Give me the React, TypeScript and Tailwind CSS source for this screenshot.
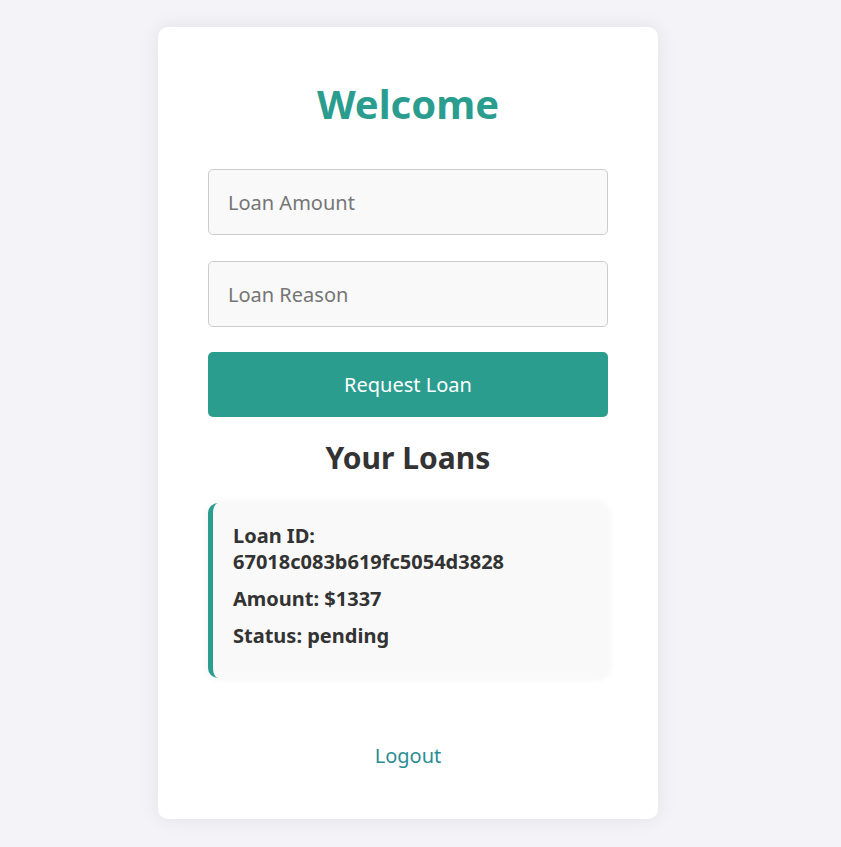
import {useState} from 'react';

interface Loan {
  id: string;
  amount: number;
  status: string;
}

const loans: Loan[] = [{id: '67018c083b619fc5054d3828', amount: 1337, status: 'pending'}];

export default function App() {
  const [amount, setAmount] = useState('');
  const [reason, setReason] = useState('');

  return (
    <div className="flex min-h-screen justify-center bg-[#f4f4f8] pt-[27px] pr-[25px] pb-[29px] font-['Noto_Sans',sans-serif] text-[#333]">
      <div className="h-fit w-[500px] rounded-[10px] bg-white p-[50px] shadow-[0_0_20px_rgba(0,0,0,0.08)]">
        <h1 className="mb-[38px] text-center text-[40px] leading-[54px] font-bold text-[#2a9d8f]">Welcome</h1>

        <input
          value={amount}
          onChange={(e) => setAmount(e.target.value)}
          placeholder="Loan Amount"
          className="mb-[26px] block h-[66px] w-full rounded-[5px] border border-[#ccc] bg-[#f9f9f9] px-[19px] text-[20px] outline-none placeholder:text-[#757575]"
        />
        <input
          value={reason}
          onChange={(e) => setReason(e.target.value)}
          placeholder="Loan Reason"
          className="mb-[25px] block h-[66px] w-full rounded-[5px] border border-[#ccc] bg-[#f9f9f9] px-[19px] text-[20px] outline-none placeholder:text-[#757575]"
        />
        <button className="block h-[65px] w-full rounded-[5px] bg-[#2a9d8f] text-[20px] text-white">Request Loan</button>

        <h2 className="mt-[21px] mb-[25px] text-center text-[30px] leading-[40px] font-bold">Your Loans</h2>

        {loans.map((loan) => (
          <div
            key={loan.id}
            className="rounded-[10px] border-l-[5px] border-[#2a9d8f] bg-[#f9f9f9] px-[20px] pt-[20px] pb-[29px] text-[20px] leading-[26px] font-bold shadow-[0_0_10px_rgba(0,0,0,0.06)]"
          >
            <p className="mb-[11px]">
              Loan ID:
              <br />
              {loan.id}
            </p>
            <p className="mb-[11px]">Amount: ${loan.amount}</p>
            <p>Status: {loan.status}</p>
          </div>
        ))}

        <div className="mt-[64px] text-center">
          <a href="#" className="text-[20px] leading-[27px] text-[#2a8d94]">
            Logout
          </a>
        </div>
      </div>
    </div>
  );
}
